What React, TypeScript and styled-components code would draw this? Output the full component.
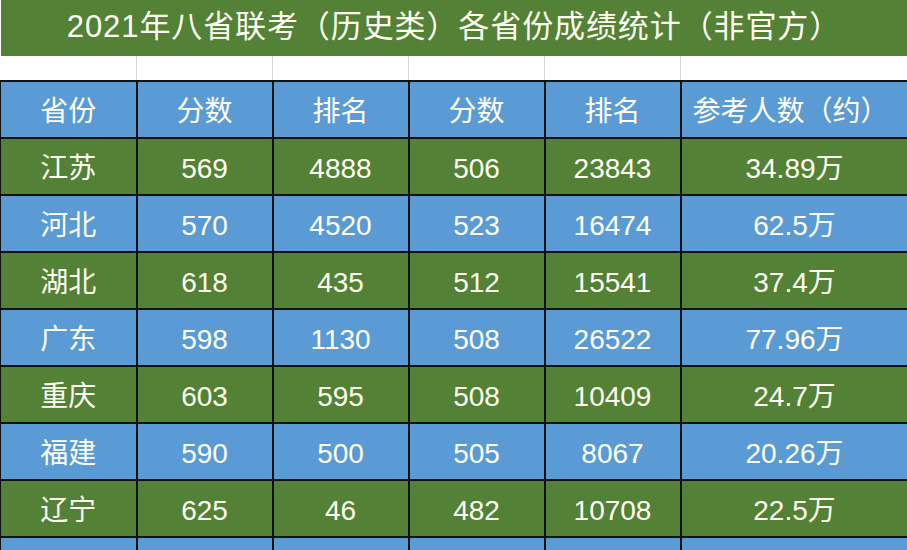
import React from "react";
import styled, { createGlobalStyle } from "styled-components";

const GlobalStyle = createGlobalStyle`
  html, body {
    margin: 0;
    padding: 0;
    overflow: hidden;
    background: #ffffff;
  }
  body {
    font-family: "Liberation Sans", "Noto Sans CJK SC", sans-serif;
  }
`;

const GREEN = "#538135";
const BLUE = "#5b9bd5";
const INK = "#fffef2";

const Sheet = styled.table`
  width: 907px;
  border-collapse: collapse;
  table-layout: fixed;
  color: ${INK};
`;

const TitleCell = styled.td`
  height: 54px;
  padding: 0 0 2px 0;
  background: ${GREEN};
  text-align: center;
  font-size: 31px;
  letter-spacing: 0.9px;
  line-height: 34px;
`;

const GapCell = styled.td`
  height: 24px;
  padding: 0;
  background: #ffffff;
  border-left: 1px solid #d4d4d4;
  &:first-child {
    border-left: none;
  }
`;

const Cell = styled.td<{ $tone: "green" | "blue" }>`
  height: 51px;
  padding: 4px 0 0 0;
  background: ${(p) => (p.$tone === "green" ? GREEN : BLUE)};
  border: 2px solid #111;
  text-align: center;
  vertical-align: middle;
  font-size: 28px;
  line-height: 30px;
  white-space: nowrap;
  &:first-child {
    border-left-width: 1px;
  }
  &:last-child {
    border-right: none;
  }
`;

const HeadCell = styled(Cell)<{ $shift?: boolean }>`
  padding-right: ${(p) => (p.$shift ? "8px" : "0")};
`;

const widths = [136, 136, 136, 136, 136, 227];

const headers = ["省份", "分数", "排名", "分数", "排名", "参考人数（约）"];

const rows = [
  ["江苏", "569", "4888", "506", "23843", "34.89万"],
  ["河北", "570", "4520", "523", "16474", "62.5万"],
  ["湖北", "618", "435", "512", "15541", "37.4万"],
  ["广东", "598", "1130", "508", "26522", "77.96万"],
  ["重庆", "603", "595", "508", "10409", "24.7万"],
  ["福建", "590", "500", "505", "8067", "20.26万"],
  ["辽宁", "625", "46", "482", "10708", "22.5万"],
  ["", "", "", "", "", ""],
];

export default function App() {
  return (
    <>
      <GlobalStyle />
      <Sheet>
        <colgroup>
          {widths.map((w, i) => (
            <col key={i} style={{ width: w }} />
          ))}
        </colgroup>
        <tbody>
          <tr>
            <TitleCell colSpan={6}>2021年八省联考（历史类）各省份成绩统计（非官方）</TitleCell>
          </tr>
          <tr>
            {widths.map((_, i) => (
              <GapCell key={i} />
            ))}
          </tr>
          <tr>
            {headers.map((h, i) => (
              <HeadCell key={i} $tone="blue" $shift={i === 5}>
                {h}
              </HeadCell>
            ))}
          </tr>
          {rows.map((r, ri) => (
            <tr key={ri}>
              {r.map((v, ci) => (
                <Cell key={ci} $tone={ri % 2 === 0 ? "green" : "blue"}>
                  {v}
                </Cell>
              ))}
            </tr>
          ))}
        </tbody>
      </Sheet>
    </>
  );
}
